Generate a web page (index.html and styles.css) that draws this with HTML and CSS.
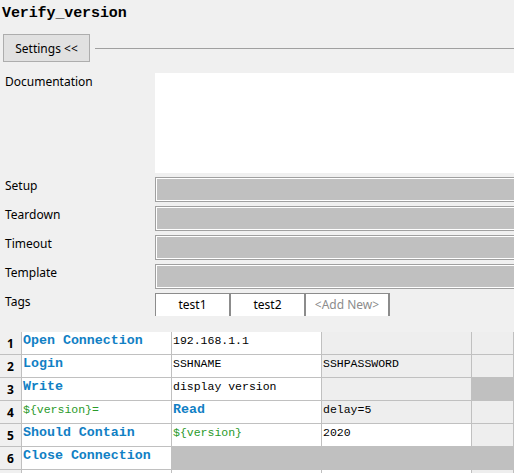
FILE: index.html
```html
<!DOCTYPE html>
<html>
<head>
<meta charset="utf-8">
<link rel="stylesheet" href="styles.css">
</head>
<body>
<div class="page">
  <div class="title">Verify_version</div>
  <div class="settings-row">
    <button class="settings-btn">Settings &lt;&lt;</button>
    <div class="sep"></div>
  </div>
  <div class="form">
    <div class="row doc-row">
      <div class="label">Documentation</div>
      <div class="doc"></div>
    </div>
    <div class="row">
      <div class="label">Setup</div>
      <div class="field"></div>
    </div>
    <div class="row">
      <div class="label">Teardown</div>
      <div class="field"></div>
    </div>
    <div class="row">
      <div class="label">Timeout</div>
      <div class="field"></div>
    </div>
    <div class="row">
      <div class="label">Template</div>
      <div class="field"></div>
    </div>
    <div class="row tags-row">
      <div class="label">Tags</div>
      <div class="tags">
        <div class="tag">test1</div>
        <div class="tag">test2</div>
        <div class="tag add">&lt;Add New&gt;</div>
      </div>
    </div>
  </div>
  <div class="grid">
    <div class="rh">1</div>
    <div class="c kw">Open Connection</div>
    <div class="c">192.168.1.1</div>
    <div class="c lt"></div>
    <div class="c lt"></div>

    <div class="rh">2</div>
    <div class="c kw">Login</div>
    <div class="c">SSHNAME</div>
    <div class="c lt">SSHPASSWORD</div>
    <div class="c lt"></div>

    <div class="rh">3</div>
    <div class="c kw">Write</div>
    <div class="c">display version</div>
    <div class="c lt"></div>
    <div class="c dk"></div>

    <div class="rh">4</div>
    <div class="c var">${version}=</div>
    <div class="c kw">Read</div>
    <div class="c lt">delay=5</div>
    <div class="c lt"></div>

    <div class="rh">5</div>
    <div class="c kw">Should Contain</div>
    <div class="c var">${version}</div>
    <div class="c">2020</div>
    <div class="c lt"></div>

    <div class="rh">6</div>
    <div class="c kw">Close Connection</div>
    <div class="c dk"></div>
    <div class="c dk"></div>
    <div class="c dk"></div>

    <div class="rh"></div>
    <div class="c"></div>
    <div class="c"></div>
    <div class="c"></div>
    <div class="c lt"></div>
  </div>
</div>
</body>
</html>
```

FILE: styles.css
```css
html, body {
  margin: 0;
  padding: 0;
  background: #f0f0f0;
  overflow: hidden;
}
* { box-sizing: border-box; }

.page {
  width: 514px;
  height: 473px;
  overflow: hidden;
  font-family: "Noto Sans", "Liberation Sans", sans-serif;
  font-size: 12px;
  color: #000;
}

.title {
  height: 34px;
  padding: 5px 0 0 2px;
  font-family: "Liberation Mono", monospace;
  font-weight: bold;
  font-size: 15px;
  line-height: 18px;
  letter-spacing: -0.1px;
}

.settings-row {
  display: flex;
  align-items: center;
  height: 28px;
  padding-left: 3px;
}
.settings-btn {
  width: 87px;
  height: 28px;
  margin: 0;
  padding: 0;
  border: 1px solid #adadad;
  background: #e1e1e1;
  font-family: "Noto Sans", "Liberation Sans", sans-serif;
  font-size: 12px;
  color: #000;
}
.sep {
  flex: 1;
  height: 1px;
  margin-left: 5px;
  background: #a0a0a0;
}

.form {
  margin-top: 11px;
  display: flex;
  flex-direction: column;
  gap: 4px;
}
.row {
  display: flex;
  height: 25px;
}
.doc-row { height: 100px; }
.tags-row { height: 23px; }
.label {
  width: 155px;
  flex: none;
  padding-left: 5px;
  line-height: 16px;
  padding-top: 1px;
}
.doc {
  flex: 1;
  background: #fff;
}
.field {
  flex: 1;
  background: #c0c0c0;
  border: 1px solid #a0a0a0;
  border-right: 0;
  box-shadow: inset 1px 1px 0 #fff, inset 0 -1px 0 #fff;
}
.tags {
  display: flex;
  align-items: stretch;
}
.tag {
  width: 75px;
  background: #fff;
  border: 1px solid #8c8c8c;
  border-bottom: 0;
  text-align: center;
  line-height: 21px;
}
.tag + .tag { border-left-width: 0; }
.tag:nth-child(2) { border-left: 1px solid #8c8c8c; margin-left: 0; }
.tag.add {
  width: 85px;
  color: #8c8c8c;
  border-right-width: 2px;
  border-left: 1px solid #8c8c8c;
}

.grid {
  margin-top: 16px;
  display: grid;
  grid-template-columns: 22px 150px 150px 150px 1fr;
  grid-auto-rows: 23px;
}
.rh, .c {
  border-right: 1px solid #c0c0c0;
  border-bottom: 1px solid #c0c0c0;
}
.rh {
  background: #f0f0f0;
  font-weight: bold;
  font-size: 12px;
  text-align: center;
  line-height: 24px;
}
.c {
  background: #fff;
  padding: 1px 0 0 1px;
  font-family: "Liberation Mono", monospace;
  font-size: 11.5px;
  line-height: 16px;
  white-space: nowrap;
  overflow: hidden;
}
.c.lt { background: #eeeeee; }
.c.dk { background: #c0c0c0; }
.c.kw {
  font-weight: bold;
  font-size: 13.3px;
  color: #1180c4;
}
.c.var { color: #2a9a2a; }
```
